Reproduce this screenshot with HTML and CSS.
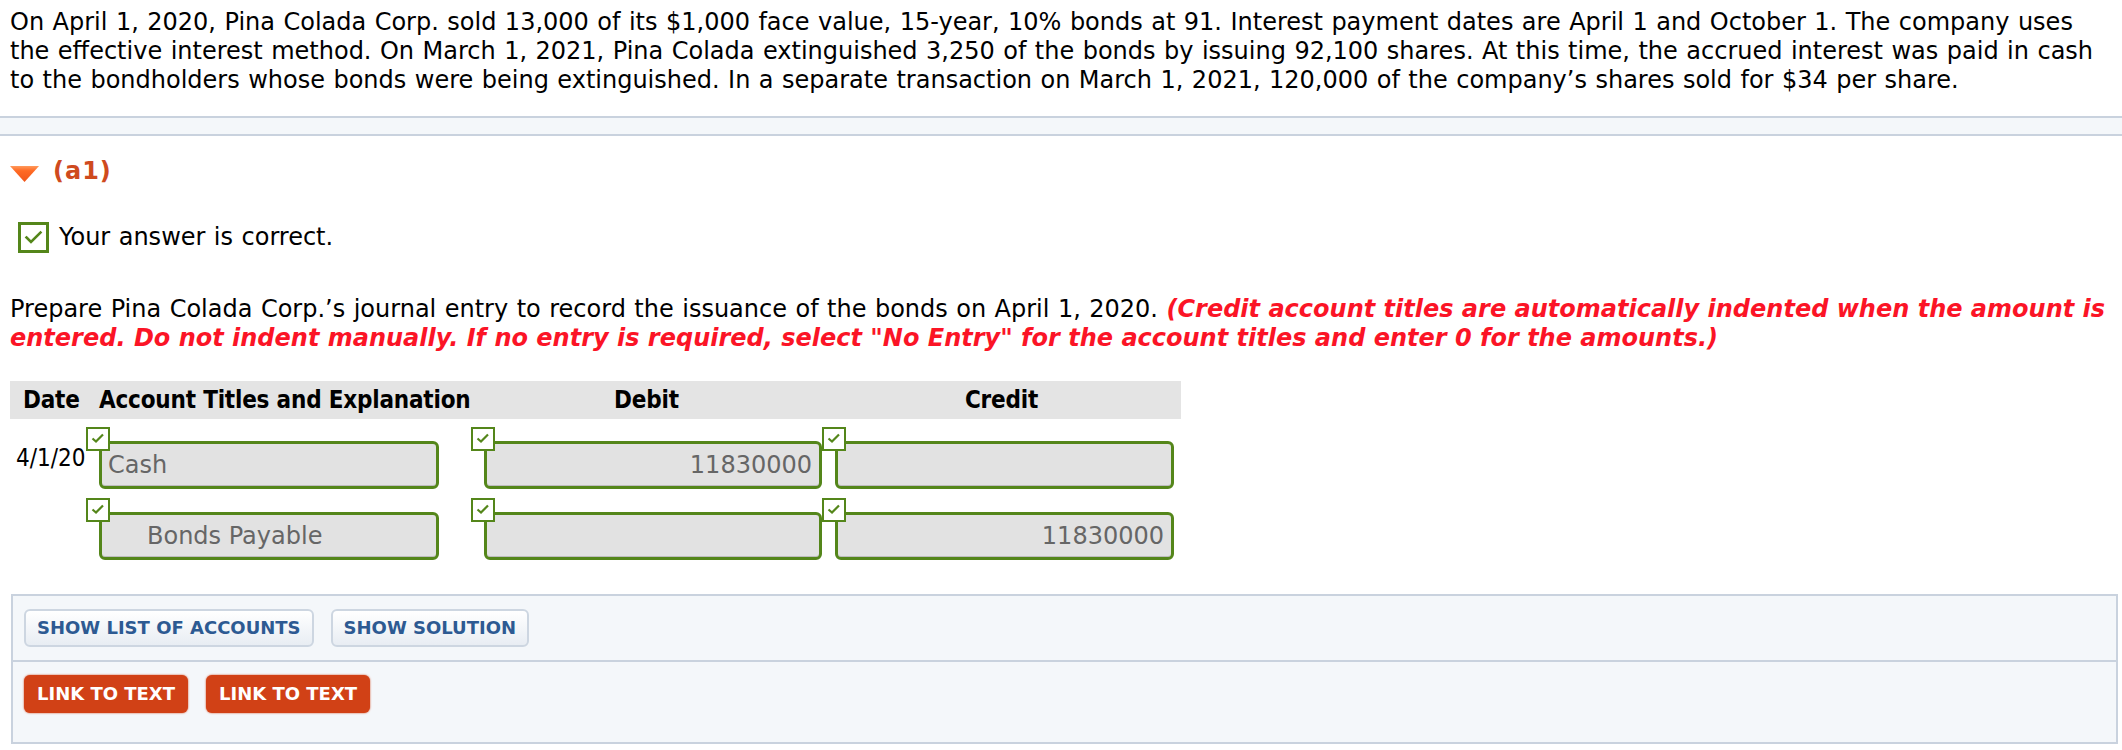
FILE: index.html
```html
<!DOCTYPE html>
<html lang="en">
<head>
<meta charset="utf-8">
<title>Journal entry – (a1)</title>
<link rel="stylesheet" href="styles.css">
</head>
<body>
<p class="problem">On April 1, 2020, Pina Colada Corp. sold 13,000 of its $1,000 face value, 15-year, 10% bonds at 91. Interest payment dates are April 1 and October 1. The company uses the effective interest method. On March 1, 2021, Pina Colada extinguished 3,250 of the bonds by issuing 92,100 shares. At this time, the accrued interest was paid in cash to the bondholders whose bonds were being extinguished. In a separate transaction on March 1, 2021, 120,000 of the company’s shares sold for $34 per share.</p>
<div class="band"></div>

<section class="part">
  <div class="part-head">
    <svg class="tri" width="29" height="16" viewBox="0 0 29 16">
      <defs>
        <linearGradient id="tg" x1="0" y1="0" x2="0" y2="1">
          <stop offset="0" stop-color="#ff9a5c"/>
          <stop offset="0.3" stop-color="#ff6a24"/>
          <stop offset="1" stop-color="#f0561a"/>
        </linearGradient>
      </defs>
      <polygon points="0,0 29,0 14.5,16" fill="url(#tg)"/>
    </svg>
    <span class="part-title">(a1)</span>
  </div>

  <div class="result">
    <span class="bigchk"><svg width="25" height="25" viewBox="0 0 25 25"><path d="M5.5 12.5 L10 17 L19.5 7.5" fill="none" stroke="#54861a" stroke-width="2.6" stroke-linecap="square"/></svg></span>
    <span>Your answer is correct.</span>
  </div>

  <p class="prompt">Prepare Pina Colada Corp.’s journal entry to record the issuance of the bonds on April 1, 2020. <em class="note">(Credit account titles are automatically indented when the amount is entered. Do not indent manually. If no entry is required, select "No Entry" for the account titles and enter 0 for the amounts.)</em></p>

  <div class="journal">
    <div class="jhead">
      <div class="h-date">Date</div>
      <div class="h-acct">Account Titles and Explanation</div>
      <div class="h-num">Debit</div>
      <div class="h-num">Credit</div>
    </div>

    <div class="jrow">
      <div class="date">4/1/20</div>
      <div class="cell">
        <span class="chk"><svg width="20" height="20" viewBox="0 0 20 20"><path d="M4.5 9.5 L8 12.5 L15 5.5" fill="none" stroke="#54861a" stroke-width="2.2"/></svg></span>
        <div class="field acct">Cash</div>
      </div>
      <div class="cell">
        <span class="chk"><svg width="20" height="20" viewBox="0 0 20 20"><path d="M4.5 9.5 L8 12.5 L15 5.5" fill="none" stroke="#54861a" stroke-width="2.2"/></svg></span>
        <div class="field debit num">11830000</div>
      </div>
      <div class="cell">
        <span class="chk"><svg width="20" height="20" viewBox="0 0 20 20"><path d="M4.5 9.5 L8 12.5 L15 5.5" fill="none" stroke="#54861a" stroke-width="2.2"/></svg></span>
        <div class="field credit num"></div>
      </div>
    </div>

    <div class="jrow second">
      <div class="date"></div>
      <div class="cell">
        <span class="chk"><svg width="20" height="20" viewBox="0 0 20 20"><path d="M4.5 9.5 L8 12.5 L15 5.5" fill="none" stroke="#54861a" stroke-width="2.2"/></svg></span>
        <div class="field acct indented">Bonds Payable</div>
      </div>
      <div class="cell">
        <span class="chk"><svg width="20" height="20" viewBox="0 0 20 20"><path d="M4.5 9.5 L8 12.5 L15 5.5" fill="none" stroke="#54861a" stroke-width="2.2"/></svg></span>
        <div class="field debit num"></div>
      </div>
      <div class="cell">
        <span class="chk"><svg width="20" height="20" viewBox="0 0 20 20"><path d="M4.5 9.5 L8 12.5 L15 5.5" fill="none" stroke="#54861a" stroke-width="2.2"/></svg></span>
        <div class="field credit num">11830000</div>
      </div>
    </div>
  </div>

  <div class="panel">
    <div class="panel-row">
      <button class="btn">SHOW LIST OF ACCOUNTS</button>
      <button class="btn">SHOW SOLUTION</button>
    </div>
    <div class="panel-row links">
      <button class="btn-link">LINK TO TEXT</button>
      <button class="btn-link">LINK TO TEXT</button>
    </div>
  </div>
</section>
</body>
</html>
```

FILE: styles.css
```css
body {
  margin: 0;
  padding: 8px 0 0;
  background: #ffffff;
  color: #000000;
  font-family: "DejaVu Sans", Verdana, sans-serif;
  font-size: 24px;
  line-height: 29px;
  word-spacing: 0.035em;
}

.problem {
  margin: 0;
  padding: 0 26px 0 10px;
}

.band {
  margin-top: 21px;
  height: 16px;
  border-top: 2px solid #c9d2de;
  border-bottom: 2px solid #c9d2de;
  background: #f4f7fa;
}

.part {
  padding: 0 4px 0 10px;
}

.part-head {
  margin-top: 21px;
  height: 29px;
  display: flex;
  align-items: center;
  gap: 14px;
  font-weight: bold;
  color: #cf4a1e;
  word-spacing: 0;
}

.part-title {
  letter-spacing: 1px;
}

.tri {
  display: block;
  margin-top: 4px;
}

.result {
  margin-top: 36px;
  padding-left: 8px;
  display: flex;
  align-items: center;
  gap: 10px;
}

.bigchk {
  width: 31px;
  height: 31px;
  box-sizing: border-box;
  border: 3px solid #54861a;
  background: #ffffff;
  display: flex;
}

.bigchk svg {
  display: block;
}

.prompt {
  margin: 42px 0 0;
  padding-right: 8px;
}

.note {
  font-weight: bold;
  font-style: italic;
  color: #fb1426;
  word-spacing: 0;
}

.journal {
  margin-top: 28px;
  width: 1171px;
  word-spacing: 0;
}

.jhead {
  display: grid;
  grid-template-columns: 76px 385px 351px 359px;
  height: 38px;
  align-items: center;
  background: #e4e4e4;
  font-family: "DejaVu Sans Condensed", "DejaVu Sans", Tahoma, sans-serif;
  font-stretch: condensed;
  font-weight: bold;
  letter-spacing: -0.2px;
  white-space: nowrap;
}

.h-date,
.h-acct {
  padding-left: 13px;
}

.h-num {
  text-align: center;
}

.jrow {
  display: grid;
  grid-template-columns: 76px 385px 351px 359px;
  margin-top: 8px;
}

.jrow.second {
  margin-top: 9px;
}

.date {
  padding: 17px 0 0 6px;
  font-family: "DejaVu Sans Condensed", "DejaVu Sans", Tahoma, sans-serif;
  font-stretch: condensed;
}

.cell {
  position: relative;
  padding: 14px 0 0 13px;
}

.chk {
  position: absolute;
  left: 0;
  top: 0;
  width: 24px;
  height: 24px;
  box-sizing: border-box;
  border: 2px solid #54861a;
  background: #ffffff;
  display: flex;
  z-index: 1;
}

.chk svg {
  display: block;
}

.field {
  height: 48px;
  box-sizing: border-box;
  border: 3px solid #54861a;
  border-radius: 6px;
  background: #e2e2e2;
  box-shadow: inset 0 -1px 0 #bdbdbd;
  color: #666666;
  display: flex;
  align-items: center;
  padding: 0 6px;
  white-space: nowrap;
}

.field.acct {
  width: 340px;
}

.field.indented {
  padding-left: 45px;
}

.field.debit {
  width: 338px;
}

.field.credit {
  width: 339px;
}

.field.num {
  justify-content: flex-end;
  padding-right: 7px;
}

.panel {
  margin: 34px 0 0 1px;
  border: 2px solid #c9d2de;
  background: #f4f7fa;
}

.panel-row {
  display: flex;
  gap: 17px;
  padding: 13px 11px;
}

.panel-row.links {
  border-top: 2px solid #c9d2de;
  padding-bottom: 29px;
  gap: 18px;
}

.btn,
.btn-link {
  height: 38px;
  box-sizing: border-box;
  margin: 0;
  font-family: "DejaVu Sans", Verdana, sans-serif;
  font-size: 18px;
  font-weight: bold;
  line-height: 1;
  word-spacing: 0;
  display: inline-flex;
  align-items: center;
  border-radius: 6px;
}

.btn {
  padding: 0 11px;
  border: 2px solid #cdd6e1;
  background: linear-gradient(#ffffff, #e8edf3);
  color: #2d5a92;
}

.btn-link {
  padding: 0 13px;
  border: 0;
  background: #d14116;
  color: #ffffff;
  box-shadow: 0 0 2px #d14116;
}
```
